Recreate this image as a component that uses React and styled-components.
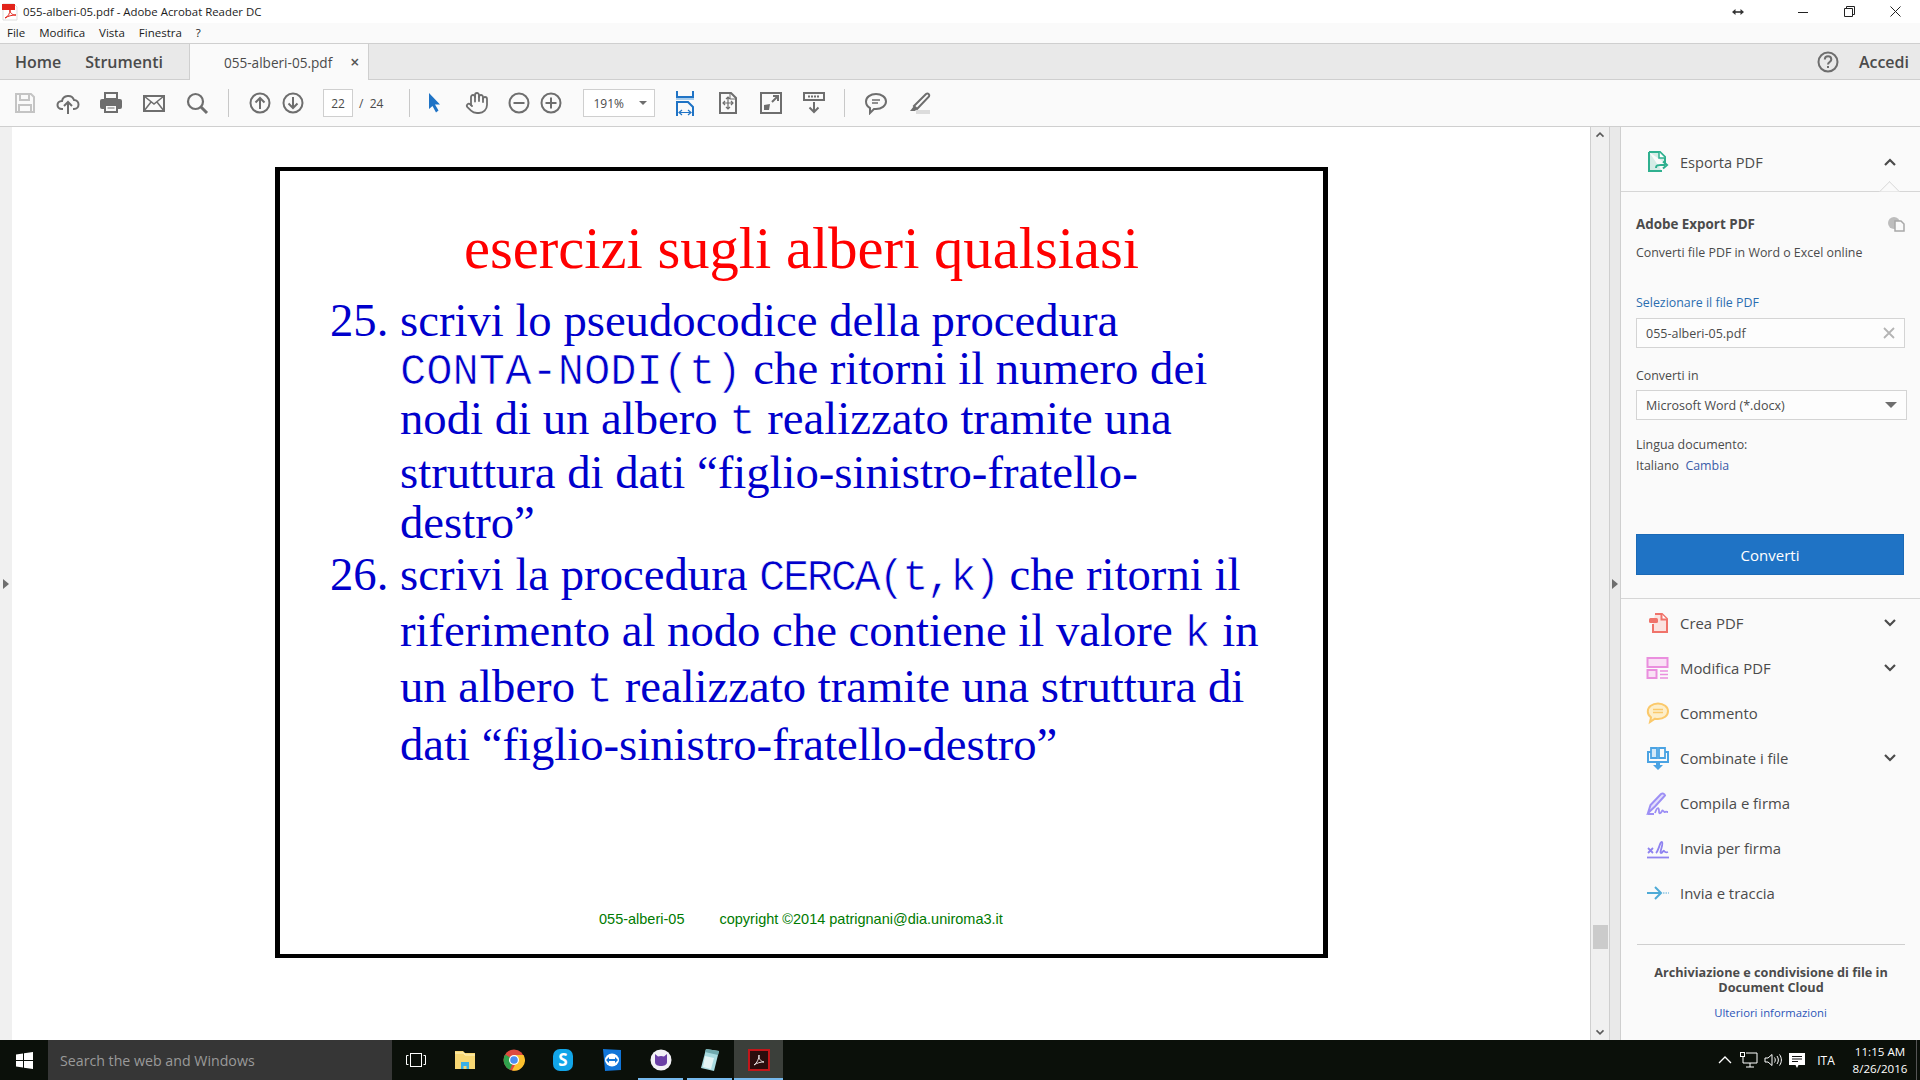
import React from "react";
import styled, { createGlobalStyle } from "styled-components";
import { Hand } from "lucide-react";

const GlobalStyle = createGlobalStyle`
  html, body {
    margin: 0;
    padding: 0;
    height: 100%;
    overflow: hidden;
    background: #fff;
  }
  * { box-sizing: border-box; }
`;

const Window = styled.div`
  width: 1920px;
  height: 1080px;
  display: flex;
  flex-direction: column;
  font-family: "Open Sans", "Noto Sans", sans-serif;
  color: #4b4b4b;
  overflow: hidden;
`;

/* title bar */
const TitleBar = styled.div`
  height: 23px;
  background: #fff;
  display: flex;
  align-items: center;
  padding: 0 2px;
  color: #1c1c1c;
  font-size: 11.4px;
  font-family: "Open Sans", sans-serif;
`;
const TitleText = styled.span`
  margin-left: 5px;
  flex: 1;
`;
const WinButton = styled.div`
  width: ${(p) => p.$w || 46}px;
  height: 23px;
  display: flex;
  align-items: center;
  justify-content: center;
`;
const MenuBar = styled.div`
  height: 21px;
  background: #fafafa;
  border-bottom: 1px solid #cfcfcf;
  display: flex;
  align-items: center;
  padding: 0 0 1px 7px;
  gap: 14px;
  font-size: 11.5px;
  color: #1c1c1c;
`;

/* tab bar */
const TabBar = styled.div`
  height: 36px;
  background: #e9e9e9;
  border-bottom: 1px solid #cfcfcf;
  display: flex;
  align-items: stretch;
  font-size: 16px;
  font-weight: 600;
`;
const NavTab = styled.div`
  display: flex;
  align-items: center;
  margin-left: ${(p) => p.$ml}px;
`;
const DocTab = styled.div`
  width: 180px;
  margin-left: 26px;
  margin-bottom: -1px;
  background: #fafafa;
  border-left: 1px solid #cfcfcf;
  border-right: 1px solid #cfcfcf;
  display: flex;
  align-items: center;
  font-size: 13.6px;
  font-weight: 400;
  padding-left: 34px;
`;
const TabClose = styled.span`
  margin-left: 18px;
  font-size: 16px;
  font-weight: 600;
  color: #555;
`;
const TabRight = styled.div`
  margin-left: auto;
  display: flex;
  align-items: center;
  gap: 19px;
  padding-right: 11px;
`;

/* toolbar */
const Toolbar = styled.div`
  height: 47px;
  background: #fafafa;
  border-bottom: 1px solid #cfcfcf;
  display: flex;
  align-items: center;
  padding-left: 3px;
  font-size: 12px;
`;
const ToolButton = styled.div`
  width: ${(p) => p.$w || 43}px;
  height: 32px;
  margin-right: ${(p) => p.$mr || 0}px;
  display: flex;
  align-items: center;
  justify-content: center;
`;
const ToolSep = styled.div`
  width: 1px;
  height: 28px;
  background: #c8c8c8;
  margin: 0 ${(p) => p.$mr || 14}px 0 ${(p) => p.$ml || 10}px;
`;
const PageInput = styled.div`
  width: 30px;
  height: 28px;
  margin-left: 14px;
  background: #fff;
  border: 1px solid #cfcfcf;
  display: flex;
  align-items: center;
  justify-content: center;
`;
const PageTotal = styled.span`
  margin: 0 25px 0 3px;
  white-space: pre;
`;
const ZoomCombo = styled.div`
  width: 72px;
  height: 28px;
  margin: 0 8px 0 16px;
  background: #fff;
  border: 1px solid #cfcfcf;
  display: flex;
  align-items: center;
  justify-content: space-between;
  padding: 0 7px 0 9px;
`;
const Caret = styled.span`
  width: 0;
  height: 0;
  border-left: ${(p) => p.$s || 4}px solid transparent;
  border-right: ${(p) => p.$s || 4}px solid transparent;
  border-top: ${(p) => p.$s || 4}px solid #6e6e6e;
`;

/* main area */
const Main = styled.div`
  flex: 1;
  min-height: 0;
  display: flex;
`;
const Gutter = styled.div`
  width: 12px;
  flex-shrink: 0;
  background: #f0f0f0;
  display: flex;
  align-items: center;
`;
const Arrow = styled.span`
  width: 0;
  height: 0;
  margin-left: ${(p) => p.$ml || 0}px;
  margin-top: 1px;
  border-top: 5px solid transparent;
  border-bottom: 5px solid transparent;
  border-left: 6px solid #6e6e6e;
`;
const DocArea = styled.div`
  width: 1578px;
  flex-shrink: 0;
  background: #fff;
  padding: 40px 0 0 263px;
`;
const Slide = styled.div`
  width: 1053px;
  height: 791px;
  border: 4px solid #000;
  border-width: 4px 5px;
  display: flex;
  flex-direction: column;
  font-family: "Liberation Serif", "Times New Roman", serif;
  color: #0000cc;
  font-size: 46.7px;
`;
const SlideTitle = styled.div`
  margin-top: 46px;
  margin-bottom: 15px;
  text-align: center;
  font-size: 58.6px;
  line-height: 64px;
  color: #ff0000;
`;
const Item = styled.div`
  display: flex;
  padding-left: 50px;
`;
const ItemNum = styled.div`
  width: 70px;
  line-height: 48px;
  margin-top: ${(p) => p.$mt || 0}px;
`;
const Line = styled.div`
  line-height: 48px;
  height: 48px;
  white-space: pre;
  margin-top: ${(p) => p.$mt || 0}px;
`;
const Code = styled.span`
  font-family: "Liberation Mono", "Courier New", monospace;
  font-size: 43.8px;
  font-weight: 400;
  letter-spacing: ${(p) => p.$ls || 0}px;
  -webkit-text-stroke: 0.7px #fff;
  paint-order: fill stroke;
`;
const SlideFooter = styled.div`
  margin-top: auto;
  padding: 0 0 27px 319px;
  display: flex;
  gap: 35px;
  font-family: "Liberation Sans", Arial, sans-serif;
  font-size: 14.5px;
  color: #007a00;
`;

const Scrollbar = styled.div`
  width: 19px;
  flex-shrink: 0;
  background: #f0f0f0;
  border-left: 1px solid #cfcfcf;
  display: flex;
  flex-direction: column;
  align-items: center;
  padding: 4px 0;
`;
const Thumb = styled.div`
  width: 15px;
  height: 24px;
  margin-top: 787px;
  margin-bottom: auto;
  background: #cbcbcb;
`;
const PanelGutter = styled.div`
  width: 12px;
  flex-shrink: 0;
  background: #e9e9e9;
  border-left: 1px solid #cfcfcf;
  border-right: 1px solid #cfcfcf;
  display: flex;
  align-items: center;
`;

/* right panel */
const Panel = styled.div`
  flex: 1;
  min-width: 0;
  background: #fafafa;
  font-size: 12px;
  display: flex;
  flex-direction: column;
`;
const PanelHead = styled.div`
  position: relative;
  height: 65px;
  border-bottom: 1px solid #d6d6d6;
  display: flex;
  align-items: center;
  padding: 6px 23px 0 25px;
  font-size: 14.6px;
  &::after {
    content: "";
    position: absolute;
    right: 23px;
    bottom: -1px;
    width: 14px;
    height: 14px;
    background: #fafafa;
    border-left: 1px solid #d6d6d6;
    border-top: 1px solid #d6d6d6;
    transform: translateY(7px) rotate(45deg);
    clip-path: polygon(0 0, 100% 0, 0 100%);
  }
`;
const HeadLabel = styled.span`
  margin-left: 10px;
  flex: 1;
`;
const PanelBody = styled.div`
  padding: 0 15px 0 15px;
  display: flex;
  flex-direction: column;
`;
const ExportTitle = styled.div`
  margin-top: 22px;
  height: 20px;
  line-height: 20px;
  display: flex;
  justify-content: space-between;
  align-items: center;
  font-weight: 700;
  font-size: 13.4px;
`;
const Text = styled.div`
  margin-top: ${(p) => p.$mt || 0}px;
  height: 18px;
  line-height: 18px;
  font-size: 12.4px;
  color: ${(p) => p.$color || "#4b4b4b"};
  white-space: pre;
`;
const LinkText = styled.span`
  color: #3a5ca8;
`;
const Field = styled.div`
  margin-top: ${(p) => p.$mt}px;
  width: ${(p) => p.$w}px;
  height: 30px;
  flex-shrink: 0;
  border: 1px solid #d4d4d4;
  background: #fdfdfd;
  display: flex;
  align-items: center;
  justify-content: space-between;
  padding: 0 9px 0 9px;
  font-size: 12.5px;
`;
const ConvertButton = styled.div`
  margin-top: 59px;
  width: 268px;
  height: 41px;
  background: #1f73c5;
  border: 1px solid #1a69b6;
  color: #fff;
  font-size: 15px;
  display: flex;
  align-items: center;
  justify-content: center;
`;
const SectionRule = styled.div`
  margin-top: 23px;
  border-top: 1px solid #d6d6d6;
  height: 2px;
`;
const ToolRow = styled.div`
  height: 45px;
  display: flex;
  align-items: center;
  padding: 0 23px 0 25px;
  font-size: 14.9px;
`;
const ToolLabel = styled.span`
  margin-left: 10px;
  flex: 1;
`;
const PromoRule = styled.div`
  margin: 29px 15px 0 16px;
  border-top: 1px solid #cfcfcf;
`;
const Promo = styled.div`
  margin-top: 20px;
  padding: 0 15px 0 16px;
  text-align: center;
  font-weight: 700;
  font-size: 12.7px;
  line-height: 15px;
`;
const PromoLink = styled.div`
  margin-top: 10px;
  text-align: center;
  font-size: 11.3px;
  line-height: 16px;
  color: #2a55b8;
`;

/* taskbar */
const Taskbar = styled.div`
  height: 40px;
  background: #0b100a;
  color: #fff;
  display: flex;
  align-items: stretch;
`;
const StartButton = styled.div`
  width: 48px;
  display: flex;
  align-items: center;
  justify-content: center;
`;
const SearchBox = styled.div`
  width: 344px;
  background: #363636;
  color: #9a9a9a;
  font-size: 14.2px;
  display: flex;
  align-items: center;
  padding-left: 12px;
`;
const TaskIcon = styled.div`
  position: relative;
  width: ${(p) => p.$w || 49}px;
  display: flex;
  align-items: center;
  justify-content: center;
  background: ${(p) => (p.$active ? "#3b3f3a" : "transparent")};
  &::after {
    content: "";
    display: ${(p) => (p.$open ? "block" : "none")};
    position: absolute;
    left: ${(p) => (p.$active ? 0 : 2)}px;
    right: ${(p) => (p.$active ? 0 : 2)}px;
    bottom: 0;
    height: 2px;
    background: #76b9ed;
  }
`;
const Tray = styled.div`
  margin-left: auto;
  display: flex;
  align-items: center;
  font-size: 12px;
`;
const TrayItem = styled.div`
  width: ${(p) => p.$w || 24}px;
  display: flex;
  justify-content: center;
`;
const Clock = styled.div`
  width: 64px;
  margin-left: 5px;
  margin-right: 4px;
  text-align: center;
  line-height: 17px;
  font-size: 11.6px;
`;
const ShowDesktop = styled.div`
  width: 1px;
  align-self: stretch;
  background: #555;
  margin-right: 3px;
`;

const Ico = ({ w = 24, h = 24, vb, children }) => (
  <svg width={w} height={h} viewBox={vb || `0 0 ${w} ${h}`} fill="none">
    {children}
  </svg>
);

const G = "#6e6e6e";

const Chevron = ({ up, c = "#4b4b4b", small }) => (
  <Ico w={small ? 10 : 14} h={small ? 7 : 10} vb="0 0 14 10">
    <path d={up ? "M2 8l5-5 5 5" : "M2 2l5 5 5-5"} stroke={c} strokeWidth="2.2" />
  </Ico>
);

const CircleArrow = ({ down }) => (
  <Ico>
    <circle cx="12" cy="12" r="9.5" stroke={G} strokeWidth="2" />
    <path
      d={down ? "M12 6v11M7.5 12.5l4.5 4.5 4.5-4.5" : "M12 18V7M7.5 11.5L12 7l4.5 4.5"}
      stroke={G}
      strokeWidth="2"
    />
  </Ico>
);

const CircleSign = ({ plus }) => (
  <Ico>
    <circle cx="12" cy="12" r="9.5" stroke={G} strokeWidth="2" />
    <path d={plus ? "M6.5 12h11M12 6.5v11" : "M6.5 12h11"} stroke={G} strokeWidth="2" />
  </Ico>
);

const toolRows = [
  { label: "Crea PDF", more: true, icon: "crea" },
  { label: "Modifica PDF", more: true, icon: "modifica" },
  { label: "Commento", icon: "commento" },
  { label: "Combinate i file", more: true, icon: "combina" },
  { label: "Compila e firma", icon: "compila" },
  { label: "Invia per firma", icon: "firma" },
  { label: "Invia e traccia", icon: "traccia" },
];

const ToolIcon = ({ name }) => {
  switch (name) {
    case "crea":
      return (
        <Ico>
          <path d="M9 3h7l5 5v13H7v-8" fill="#fbe3e0" stroke="#f0736a" strokeWidth="2" />
          <path d="M15.5 3v5.5H21" stroke="#f0736a" strokeWidth="2" fill="#fff" />
          <rect x="3" y="7" width="9" height="5" rx="1.5" fill="#f0736a" />
        </Ico>
      );
    case "modifica":
      return (
        <Ico>
          <rect x="1.5" y="2" width="20" height="9" fill="#f9e1f5" stroke="#ea8ede" strokeWidth="2" />
          <rect x="1.5" y="14" width="9" height="8" fill="#f9e1f5" stroke="#ea8ede" strokeWidth="2" />
          <path d="M14 15h8M14 18.5h8M14 22h8" stroke="#ea8ede" strokeWidth="1.4" />
        </Ico>
      );
    case "commento":
      return (
        <Ico>
          <path
            d="M12 2.5c5.8 0 10 3.5 10 7.800s-4.200 7.700-10 7.700c-1 0-2 0-3-.3L4 21l1-4.600c-2-1.500-3.200-3.600-3.200-6C1.800 6 6.200 2.500 12 2.500z"
            fill="#fdeec9"
            stroke="#fbc96b"
            strokeWidth="2"
          />
          <path d="M7 8.500h10M7 11.500h10" stroke="#fbc96b" strokeWidth="1.4" />
        </Ico>
      );
    case "combina":
      return (
        <Ico>
          <path d="M5 6H2v10h20V6h-3" stroke="#4ba3e3" strokeWidth="2" />
          <path d="M5 2h6v10H5z" fill="#d4e9f8" stroke="#4ba3e3" strokeWidth="1.800" />
          <path d="M13 2h6v10h-6z" fill="#fafafa" stroke="#4ba3e3" strokeWidth="1.800" />
          <path d="M12 24l-5-5h3v-3h4v3h3z" fill="#4ba3e3" />
        </Ico>
      );
    case "compila":
      return (
        <Ico>
          <path d="M2 22l2.500-8L15 3c1.500-1 3.500-.5 4 1.500L9 15.500z" fill="#e3defc" stroke="#9d8ff5" strokeWidth="2" />
          <path d="M9 22c2-6 4-6 4-2s2 2 3 0 2 2 3 1 2 0 3 0M2 23h6" stroke="#9d8ff5" strokeWidth="1.8" />
        </Ico>
      );
    case "firma":
      return (
        <Ico>
          <path d="M2 12l5 5M7 12l-5 5" stroke="#8f83f0" strokeWidth="1.8" />
          <path d="M10 17c3-3 4-12 6-11s-3 11-1 11 2-3 3-2 1 2 4 1" stroke="#8f83f0" strokeWidth="1.8" />
          <path d="M1 21.500h22" stroke="#8f83f0" strokeWidth="1.800" />
        </Ico>
      );
    default:
      return (
        <Ico>
          <path d="M1 12h13M9 6l6 6-6 6" stroke="#4eaad6" strokeWidth="2" />
          <path d="M17 12h6" stroke="#8cc6e3" strokeWidth="1.500" strokeDasharray="1.500 1" />
        </Ico>
      );
  }
};

export default function App() {
  return (
    <Window>
      <GlobalStyle />
      <TitleBar>
        <Ico w={16} h={18}>
          <path d="M1 1h11l3 3v13H1z" fill="#fff" stroke="#ddd" />
          <rect x="0" y="1" width="13" height="6" fill="#e2231a" />
          <path d="M3 15c3-1 5-5 5-8 0 3 2 5 6 5-4 0-8 1-11 3z" stroke="#e2231a" strokeWidth="1" />
        </Ico>
        <TitleText>055-alberi-05.pdf - Adobe Acrobat Reader DC</TitleText>
        <WinButton $w={48}>
          <Ico w={12} h={8}>
            <path d="M1 4h10" stroke="#333" strokeWidth="1.600" />
            <path d="M3.500 1L0 4l3.500 3zM8.500 1L12 4 8.500 7z" fill="#333" />
          </Ico>
        </WinButton>
        <WinButton $w={18} />
        <WinButton>
          <Ico w={10} h={10}>
            <path d="M0 5.500h10" stroke="#222" />
          </Ico>
        </WinButton>
        <WinButton>
          <Ico w={11} h={11}>
            <path d="M.5 2.500h8v8h-8zM2.500 2.500v-2h8v8h-2" stroke="#222" />
          </Ico>
        </WinButton>
        <WinButton>
          <Ico w={11} h={11}>
            <path d="M.5.500l10 10M10.500.500l-10 10" stroke="#222" />
          </Ico>
        </WinButton>
      </TitleBar>

      <MenuBar>
        <span>File</span>
        <span>Modifica</span>
        <span>Vista</span>
        <span>Finestra</span>
        <span>?</span>
      </MenuBar>

      <TabBar>
        <NavTab $ml={15}>Home</NavTab>
        <NavTab $ml={24}>Strumenti</NavTab>
        <DocTab>
          055-alberi-05.pdf
          <TabClose>×</TabClose>
        </DocTab>
        <TabRight>
          <Ico>
            <circle cx="12" cy="12" r="9.500" stroke={G} strokeWidth="2" />
            <path d="M8.800 9.500c0-4.500 6.500-4.500 6.500 0 0 2.500-3.300 2.500-3.300 5" stroke={G} strokeWidth="2" />
            <rect x="11" y="16" width="2" height="2" fill={G} />
          </Ico>
          <span>Accedi</span>
        </TabRight>
      </TabBar>

      <Toolbar>
        <ToolButton>
          <Ico>
            <path d="M3 3h15l3 3v15H3z" stroke="#c4c4c4" strokeWidth="2" />
            <path d="M7 3v6h9V3M6 21v-7h12v7" stroke="#c4c4c4" strokeWidth="2" />
          </Ico>
        </ToolButton>
        <ToolButton>
          <Ico>
            <path
              d="M7 18H6c-6 0-6-8 0-8 1-6 10-7 12-1 6 0 6 9 0 9h-1"
              stroke={G}
              strokeWidth="2"
            />
            <path d="M12 23V11M8 15l4-4 4 4" stroke={G} strokeWidth="2" />
          </Ico>
        </ToolButton>
        <ToolButton>
          <Ico>
            <path d="M6 2h12v6H6z" stroke={G} strokeWidth="2" />
            <rect x="1" y="8" width="22" height="10" rx="2" fill={G} />
            <path d="M6 14h12v7H6z" fill="#fafafa" stroke={G} strokeWidth="2" />
            <path d="M8.500 17h7" stroke={G} />
          </Ico>
        </ToolButton>
        <ToolButton>
          <Ico>
            <rect x="2" y="5" width="20" height="15" stroke={G} strokeWidth="2" />
            <path d="M2 5l10 8 10-8M2 20l7-9M22 20l-7-9" stroke={G} strokeWidth="1.500" />
          </Ico>
        </ToolButton>
        <ToolButton>
          <Ico>
            <circle cx="10.500" cy="10.500" r="7.500" stroke={G} strokeWidth="2.200" />
            <path d="M16 16l6 6" stroke={G} strokeWidth="3" />
          </Ico>
        </ToolButton>
        <ToolSep />
        <ToolButton $w={33}>
          <CircleArrow />
        </ToolButton>
        <ToolButton $w={33}>
          <CircleArrow down />
        </ToolButton>
        <PageInput>22</PageInput>
        <PageTotal>{" /  24"}</PageTotal>
        <ToolSep $ml={1} $mr={2} />
        <ToolButton $w={43}>
          <Ico>
            <path d="M7 2l11 11.500h-5l3.500 6-2.500 2-3.500-6.500L7 18z" fill="#1f73c5" />
          </Ico>
        </ToolButton>
        <ToolButton $w={43} $mr={5}>
          <Hand size={24} color={G} strokeWidth={1.8} />
        </ToolButton>
        <ToolButton $w={31}>
          <CircleSign />
        </ToolButton>
        <ToolButton $w={33}>
          <CircleSign plus />
        </ToolButton>
        <ZoomCombo>
          191%
          <Caret />
        </ZoomCombo>
        <ToolButton $w={43}>
          <Ico w={18} h={25}>
            <path d="M1 0v6h16V0" stroke="#1f73c5" strokeWidth="2" />
            <path d="M0 8h18" stroke="#a9cdec" strokeWidth="2" />
            <path d="M1 25V11h11l5 5v9" stroke="#1f73c5" strokeWidth="2" />
            <path d="M4 21.500h10M6 19l-3 2.500L6 24M12 19l3 2.500-3 2.500" stroke="#1f73c5" strokeWidth="1.200" />
          </Ico>
        </ToolButton>
        <ToolButton $w={43}>
          <Ico w={18} h={22}>
            <path d="M1 1h11l5 5v15H1z" stroke={G} strokeWidth="2" />
            <path d="M11 1v6h6" stroke={G} />
            <path d="M9 5v12M4 11h10M7 7l2-2 2 2M7 15l2 2 2-2M6 9l-2 2 2 2M12 9l2 2-2 2" stroke={G} strokeWidth="1.200" />
          </Ico>
        </ToolButton>
        <ToolButton $w={43}>
          <Ico w={22} h={22}>
            <rect x="1" y="1" width="20" height="20" stroke={G} strokeWidth="2" />
            <path d="M12 10l5-5M13 4h5v5" stroke={G} strokeWidth="2" />
            <path d="M4 18l6-6-1 6zM4 18l0-5 6-1" fill={G} />
          </Ico>
        </ToolButton>
        <ToolButton $w={43}>
          <Ico w={22} h={22}>
            <rect x="1" y="1" width="20" height="7" stroke={G} strokeWidth="2" />
            <path d="M5 4.500h12" stroke={G} strokeWidth="2" strokeDasharray="2 1" />
            <path d="M11 10v10M6.500 15.500L11 20l4.500-4.500" stroke={G} strokeWidth="2" />
          </Ico>
        </ToolButton>
        <ToolSep $ml={9} $mr={9} />
        <ToolButton $w={44}>
          <Ico>
            <path
              d="M12 3c5.500 0 10 3.300 10 7.500S17.500 18 12 18h-2l-4 4v-5c-2.500-1.300-4-3.800-4-6.500C2 6.300 6.500 3 12 3z"
              stroke={G}
              strokeWidth="2"
            />
            <path d="M8 9h8M8 12h6" stroke={G} strokeWidth="1.400" />
          </Ico>
        </ToolButton>
        <ToolButton $w={43}>
          <Ico>
            <path d="M6 15L18 3c2-1.500 4 .5 3 2.500L9 18z" stroke={G} strokeWidth="2" />
            <path d="M6 15l3 3-2 2H2z" fill={G} />
            <rect x="8" y="19" width="14" height="4" fill="#dcdcdc" />
          </Ico>
        </ToolButton>
      </Toolbar>

      <Main>
        <Gutter>
          <Arrow $ml={3} />
        </Gutter>
        <DocArea>
          <Slide>
            <SlideTitle>esercizi sugli alberi qualsiasi</SlideTitle>
            <Item>
              <ItemNum>25.</ItemNum>
              <div>
                <Line>scrivi lo pseudocodice della procedura</Line>
                <Line>
                  <Code>CONTA-NODI(t)</Code> che ritorni il numero dei
                </Line>
                <Line $mt={2}>
                  nodi di un albero <Code>t</Code> realizzato tramite una
                </Line>
                <Line $mt={6}>struttura di dati “figlio-sinistro-fratello-</Line>
                <Line $mt={2}>destro”</Line>
              </div>
            </Item>
            <Item>
              <ItemNum $mt={4}>26.</ItemNum>
              <div>
                <Line $mt={4}>
                  scrivi la procedura <Code $ls={-2.4}>CERCA(t,k)</Code> che ritorni il
                </Line>
                <Line $mt={8}>
                  riferimento al nodo che contiene il valore <Code>k</Code> in
                </Line>
                <Line $mt={8}>
                  un albero <Code>t</Code> realizzato tramite una struttura di
                </Line>
                <Line $mt={10}>dati “figlio-sinistro-fratello-destro”</Line>
              </div>
            </Item>
            <SlideFooter>
              <span>055-alberi-05</span>
              <span>copyright ©2014 patrignani@dia.uniroma3.it</span>
            </SlideFooter>
          </Slide>
        </DocArea>
        <Scrollbar>
          <Chevron up small c="#5a5a5a" />
          <Thumb />
          <Chevron small c="#5a5a5a" />
        </Scrollbar>
        <PanelGutter>
          <Arrow $ml={2} />
        </PanelGutter>
        <Panel>
          <PanelHead>
            <Ico>
              <path d="M3 2h11l5 5v6M16 21H3V2" fill="#d5ece6" stroke="#2fb08f" strokeWidth="2" />
              <path d="M13 2v6h6" fill="#fff" stroke="#2fb08f" strokeWidth="1.500" />
              <path d="M10 18c0-3 2-3 5-3h4M17 11.500l4 3.500-4 3.500" stroke="#2fb08f" strokeWidth="2" />
            </Ico>
            <HeadLabel>Esporta PDF</HeadLabel>
            <Chevron up />
          </PanelHead>
          <PanelBody>
            <ExportTitle>
              Adobe Export PDF
              <Ico w={18} h={16}>
                <circle cx="7" cy="7" r="6" fill="#bdbdbd" />
                <path d="M8 5h6l3 3v7H8z" fill="#fafafa" stroke="#a8a8a8" strokeWidth="1.500" />
              </Ico>
            </ExportTitle>
            <Text $mt={10}>Converti file PDF in Word o Excel online</Text>
            <Text $mt={32} $color="#2a6db0">
              Selezionare il file PDF
            </Text>
            <Field $mt={6} $w={269}>
              055-alberi-05.pdf
              <Ico w={12} h={12}>
                <path d="M1 1l10 10M11 1L1 11" stroke="#b4b4b4" strokeWidth="1.800" />
              </Ico>
            </Field>
            <Text $mt={19}>Converti in</Text>
            <Field $mt={5} $w={271}>
              Microsoft Word (*.docx)
              <Caret $s={6} />
            </Field>
            <Text $mt={16}>Lingua documento:</Text>
            <Text $mt={3}>
              Italiano{"  "}
              <LinkText>Cambia</LinkText>
            </Text>
            <ConvertButton>Converti</ConvertButton>
          </PanelBody>
          <SectionRule />
          {toolRows.map((row) => (
            <ToolRow key={row.label}>
              <ToolIcon name={row.icon} />
              <ToolLabel>{row.label}</ToolLabel>
              {row.more && <Chevron />}
            </ToolRow>
          ))}
          <PromoRule />
          <Promo>Archiviazione e condivisione di file in Document Cloud</Promo>
          <PromoLink>Ulteriori informazioni</PromoLink>
        </Panel>
      </Main>

      <Taskbar>
        <StartButton>
          <Ico w={17} h={17}>
            <path d="M0 2.500l7-1v6.500H0zM8 1.300L17 0v8H8zM0 9h7v6.500l-7-1zM8 9h9v8l-9-1.300z" fill="#fff" />
          </Ico>
        </StartButton>
        <SearchBox>Search the web and Windows</SearchBox>
        <TaskIcon $w={48}>
          <Ico w={20} h={14}>
            <rect x="4.500" y=".5" width="11" height="13" stroke="#fff" />
            <path d="M2.500 2.500h-2v9h2M17.500 2.500h2v9h-2" stroke="#fff" />
          </Ico>
        </TaskIcon>
        <TaskIcon>
          <Ico w={22} h={20}>
            <path d="M1 1h8l2 2h10v16H1z" fill="#f7d774" />
            <path d="M1 3h9l1 2h10" stroke="#fff3c2" />
            <path d="M7 19v-7h8v7h-2.500v-3h-3v3z" fill="#3ab0e8" />
          </Ico>
        </TaskIcon>
        <TaskIcon>
          <Ico w={22} h={22}>
            <circle cx="11" cy="11" r="10.500" fill="#dd4b3e" />
            <path d="M11 11L2.200 5.500A10.500 10.500 0 0 0 7 20.700z" fill="#2fa24c" />
            <path d="M11 6h9.500A10.500 10.500 0 0 1 9 21.400L14 12z" fill="#fbc02d" />
            <circle cx="11" cy="11" r="5" fill="#fff" />
            <circle cx="11" cy="11" r="3.800" fill="#4a8ef0" />
          </Ico>
        </TaskIcon>
        <TaskIcon>
          <Ico w={22} h={24}>
            <rect x="1" y="1" width="20" height="22" rx="7" fill="#12a5e8" />
            <text x="11" y="18" fontSize="17" fontWeight="700" fill="#fff" textAnchor="middle" fontFamily="Open Sans">
              S
            </text>
          </Ico>
        </TaskIcon>
        <TaskIcon>
          <Ico w={20} h={24}>
            <path d="M1 1l18 1v20L3 23z" fill="#1175d8" />
            <ellipse cx="10" cy="12" rx="7" ry="6.500" fill="#fff" />
            <path d="M4 12l3-3v2h6V9l3 3-3 3v-2H7v2z" fill="#1175d8" />
          </Ico>
        </TaskIcon>
        <TaskIcon $open>
          <Ico w={22} h={22}>
            <circle cx="11" cy="11" r="10.500" fill="#f2f0f6" />
            <path d="M5 5l3 2.500c2-.7 4-.7 6 0L17 5v8c0 3-3 4-6 4s-6-1-6-4z" fill="#6b3fa6" />
          </Ico>
        </TaskIcon>
        <TaskIcon $open>
          <Ico w={20} h={24}>
            <path d="M6 1l13 2-5 20-13-3z" fill="#a9dbe0" />
            <path d="M6 1l13 2-1 4-13-3z" fill="#6fa9ae" />
            <path d="M5 8l9 2-3 11-8-2z" fill="#e3f4f4" />
          </Ico>
        </TaskIcon>
        <TaskIcon $open $active>
          <Ico w={22} h={24}>
            <rect x="1" y="2" width="20" height="20" fill="#2a0d0d" stroke="#c2161a" strokeWidth="2" />
            <path d="M6 17c3-2 5-6 5-10 0 4 1 6 5 7-4 0-7 1-10 3z" stroke="#e8e0e0" strokeWidth="1" />
          </Ico>
        </TaskIcon>
        <Tray>
          <TrayItem>
            <Ico w={14} h={8}>
              <path d="M1 7l6-6 6 6" stroke="#fff" strokeWidth="1.300" />
            </Ico>
          </TrayItem>
          <TrayItem>
            <Ico w={18} h={16}>
              <path d="M3 4v7h14V1H6M10 11v4M6 15h8" stroke="#fff" />
              <rect x=".5" y=".5" width="4" height="4" stroke="#fff" />
            </Ico>
          </TrayItem>
          <TrayItem>
            <Ico w={18} h={14}>
              <path d="M1 5h3l4-3.500v11L4 9H1zM10.500 4.500c1 1.500 1 3.500 0 5M13 3c1.800 2.500 1.800 5.500 0 8M15.500 1.500c2.500 3.500 2.500 7.500 0 11" stroke="#fff" />
            </Ico>
          </TrayItem>
          <TrayItem>
            <Ico w={16} h={15}>
              <path d="M0 0h16v12H9.500L8 15l-1.500-3H0z" fill="#fff" />
              <path d="M3 3.500h10M3 6h10M3 8.500h6" stroke="#111" />
            </Ico>
          </TrayItem>
          <TrayItem $w={34}>ITA</TrayItem>
          <Clock>
            <div>11:15 AM</div>
            <div>8/26/2016</div>
          </Clock>
          <ShowDesktop />
        </Tray>
      </Taskbar>
    </Window>
  );
}
